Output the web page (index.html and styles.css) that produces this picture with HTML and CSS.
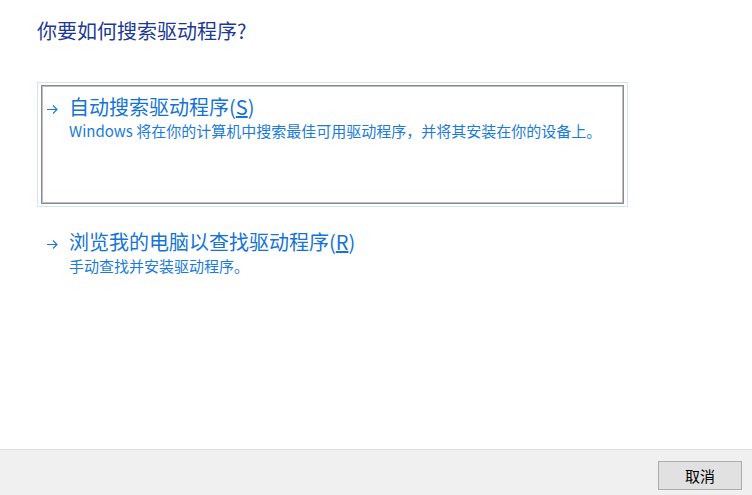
FILE: index.html
```html
<!DOCTYPE html>
<html lang="zh-CN">
<head>
<meta charset="utf-8">
<title>更新驱动程序</title>
<link rel="stylesheet" href="styles.css">
</head>
<body>
<div class="dialog">
  <main class="content">
    <h1 class="title">你要如何搜索驱动程序?</h1>
    <div class="options">
      <div class="option focused">
        <div class="option-inner">
          <svg class="arrow" width="11" height="9" viewBox="0 0 11 9"><path d="M0 4.5H10M6 0.5L10 4.5L6 8.5" fill="none" stroke="#1a78d6" stroke-width="1.1"/></svg>
          <div class="option-text">
            <div class="option-head">自动搜索驱动程序(<u>S</u>)</div>
            <div class="option-desc">Windows 将在你的计算机中搜索最佳可用驱动程序，并将其安装在你的设备上。</div>
          </div>
        </div>
      </div>
      <div class="option">
        <div class="option-inner">
          <svg class="arrow" width="11" height="9" viewBox="0 0 11 9"><path d="M0 4.5H10M6 0.5L10 4.5L6 8.5" fill="none" stroke="#1a78d6" stroke-width="1.1"/></svg>
          <div class="option-text">
            <div class="option-head">浏览我的电脑以查找驱动程序(<u>R</u>)</div>
            <div class="option-desc">手动查找并安装驱动程序。</div>
          </div>
        </div>
      </div>
    </div>
  </main>
  <footer class="footer">
    <button class="btn">取消</button>
  </footer>
</div>
</body>
</html>
```

FILE: styles.css
```css
html, body {
  margin: 0;
  padding: 0;
  background: #ffffff;
}
body {
  font-family: "Noto Sans CJK SC", "Noto Sans", sans-serif;
}
.dialog {
  width: 752px;
  height: 495px;
  display: flex;
  flex-direction: column;
}
.content {
  flex: 1;
  padding: 18px 0 0 37px;
}
.title {
  margin: 0;
  font-size: 20px;
  line-height: 26px;
  font-weight: normal;
  color: #1d3a93;
}
.options {
  margin-top: 38px;
  display: flex;
  flex-direction: column;
  gap: 10px;
}
.option {
  box-sizing: border-box;
  width: 591px;
  height: 125px;
  padding: 2px 3px;
  border: 1px solid transparent;
}
.option.focused {
  border-color: #cfe6f8;
}
.option-inner {
  box-sizing: border-box;
  height: 100%;
  border: 1px solid transparent;
  padding: 8px 0 0 4px;
  display: flex;
  align-items: flex-start;
}
.option.focused .option-inner {
  border-color: #8a8a8a;
  box-shadow: inset 0 0 0 1px #bdbdbd;
}
.arrow {
  flex: none;
  margin: 11px 11px 0 1px;
}
.option-head {
  font-size: 20px;
  line-height: 26px;
  color: #1474d4;
}
.option-head u {
  text-underline-offset: 1px;
}
.option-desc {
  margin-top: 1px;
  font-size: 15px;
  line-height: 20px;
  color: #1a7cd8;
}
.footer {
  box-sizing: border-box;
  height: 46px;
  flex: none;
  background: #f0f0f0;
  border-top: 1px solid #dfdfdf;
  display: flex;
  justify-content: flex-end;
  align-items: flex-start;
  padding: 11px 10px 0 0;
}
.btn {
  box-sizing: border-box;
  width: 84px;
  height: 29px;
  background: #e1e1e1;
  border: 1px solid #adadad;
  font-family: "Noto Sans CJK SC", "Noto Sans", sans-serif;
  font-size: 15px;
  line-height: 20px;
  color: #000000;
  padding: 0;
}
```
